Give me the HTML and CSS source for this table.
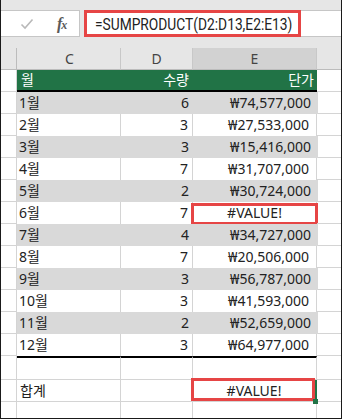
FILE: index.html
```html
<!DOCTYPE html>
<html lang="ko">
<head>
<meta charset="utf-8">
<title>SUMPRODUCT</title>
<link rel="stylesheet" href="styles.css">
</head>
<body>
<div class="app">
  <div class="fbar">
    <div class="fbtns">
      <svg class="check" width="14" height="12" viewBox="0 0 14 12"><path d="M1.5 6.5 L5 10 L12.5 1.5" fill="none" stroke="#b9b9b9" stroke-width="1.6"/></svg>
      <span class="fx">f<span class="x">x</span></span>
    </div>
    <div class="redbox"><span class="formula">=SUMPRODUCT(D2:D13,E2:E13)</span></div>
    <div class="finput"></div>
  </div>
  <div class="sheet">
    <div class="row colhead">
      <div class="rh"></div><div class="c">C</div><div class="d">D</div><div class="e selcol">E</div><div class="rest"></div>
    </div>
    <div class="row thead">
      <div class="rh"></div><div class="c">월</div><div class="d num">수량</div><div class="e num hd">단가</div><div class="rest"></div>
    </div>
    <div class="row data g"><div class="rh"></div><div class="c">1월</div><div class="d num">6</div><div class="e num">₩74,577,000</div><div class="rest"></div></div>
    <div class="row data"><div class="rh"></div><div class="c">2월</div><div class="d num">3</div><div class="e num">₩27,533,000</div><div class="rest"></div></div>
    <div class="row data g"><div class="rh"></div><div class="c">3월</div><div class="d num">3</div><div class="e num">₩15,416,000</div><div class="rest"></div></div>
    <div class="row data"><div class="rh"></div><div class="c">4월</div><div class="d num">7</div><div class="e num">₩31,707,000</div><div class="rest"></div></div>
    <div class="row data g"><div class="rh"></div><div class="c">5월</div><div class="d num">2</div><div class="e num">₩30,724,000</div><div class="rest"></div></div>
    <div class="row data"><div class="rh"></div><div class="c">6월</div><div class="d num">7</div><div class="e err mark">#VALUE!</div><div class="rest"></div></div>
    <div class="row data g"><div class="rh"></div><div class="c">7월</div><div class="d num">4</div><div class="e num">₩34,727,000</div><div class="rest"></div></div>
    <div class="row data"><div class="rh"></div><div class="c">8월</div><div class="d num">7</div><div class="e num">₩20,506,000</div><div class="rest"></div></div>
    <div class="row data g"><div class="rh"></div><div class="c">9월</div><div class="d num">3</div><div class="e num">₩56,787,000</div><div class="rest"></div></div>
    <div class="row data"><div class="rh"></div><div class="c">10월</div><div class="d num">3</div><div class="e num">₩41,593,000</div><div class="rest"></div></div>
    <div class="row data g"><div class="rh"></div><div class="c">11월</div><div class="d num">2</div><div class="e num">₩52,659,000</div><div class="rest"></div></div>
    <div class="row data"><div class="rh"></div><div class="c">12월</div><div class="d num">3</div><div class="e num">₩64,977,000</div><div class="rest"></div></div>
    <div class="row empty"><div class="rh"></div><div class="c"></div><div class="d"></div><div class="e"></div><div class="rest"></div></div>
    <div class="row total"><div class="rh"></div><div class="c">합계</div><div class="d"></div><div class="e err mark sel">#VALUE!<span class="handle"></span></div><div class="rest"></div></div>
    <div class="row last"><div class="rh"></div><div class="c"></div><div class="d"></div><div class="e"></div><div class="rest"></div></div>
  </div>
</div>
</body>
</html>
```

FILE: styles.css
```css
* { box-sizing: border-box; }
html, body { margin: 0; padding: 0; background: #fff; }
body {
  font-family: "Noto Sans", "Noto Sans CJK KR", sans-serif;
  color: #222;
}
.app {
  width: 342px;
  height: 419px;
  background: #e6e6e6;
  border-left: 1px solid #1a1a1a;
  border-right: 1px solid #1a1a1a;
  border-bottom: 1px solid #1a1a1a;
  overflow: hidden;
}
.fbar {
  display: flex;
  height: 37px;
  padding-top: 10px;
  margin-bottom: 11px;
  gap: 4px;
}
.fbtns {
  width: 79px;
  background: #fff;
  border: 1px solid #c6c6c6;
  border-left: none;
  display: flex;
  align-items: center;
  padding-left: 19px;
}
.check { margin-top: 1px; }
.fx {
  margin-left: 23px;
  font-family: "Liberation Serif", serif;
  font-style: italic;
  font-weight: bold;
  font-size: 16px;
  color: #5a5a5a;
  letter-spacing: -1px;
}
.fx .x { font-size: 12px; }
.redbox {
  width: 217px;
  border: 3px solid #e64545;
  background: #fff;
  overflow: hidden;
}
.formula {
  display: inline-block;
  font-family: Roboto, "Noto Sans", sans-serif;
  font-size: 17px;
  line-height: 21px;
  margin-left: 8px;
  color: #222;
  white-space: nowrap;
  transform: scaleX(0.81);
  transform-origin: left center;
}
.finput {
  flex: 1;
  margin-left: -4px;
  background: #fff;
  border-top: 1px solid #c6c6c6;
  border-bottom: 1px solid #c6c6c6;
}
.sheet { background: #fff; }
.row {
  display: flex;
  height: 22px;
  font-size: 14px;
  line-height: 21px;
}
.row > div { flex: none; position: relative; white-space: nowrap; }
.rh { width: 16px; border-right: 1px solid #d4d4d4; border-bottom: 1px solid #d4d4d4; }
.c { width: 104px; padding-left: 2px; }
.d { width: 72px; }
.e { width: 124px; }
.rest { flex: 1 !important; border-bottom: 1px solid #d4d4d4; }
.num { text-align: right; }
.d.num { padding-right: 4px; }
.e.num { padding-right: 7px; }
.e.hd { padding-right: 3px; }

.colhead { background: #e6e6e6; }
.colhead > div {
  background: #e6e6e6;
  border-bottom: 1px solid #bcbcbc;
  border-right: 1px solid #c8c8c8;
  text-align: center;
  color: #444;
  font-size: 14px;
  line-height: 21px;
}
.colhead .rh { border-right-color: #bcbcbc; }
.colhead .rest { border-right: none; }
.colhead .selcol { background: #d2d2d2; }

.thead .c, .thead .d, .thead .e {
  background: #217346;
  color: #fff;
  border-bottom: 2px solid #000;
  line-height: 20px;
}
.thead .c { padding-left: 4px; }

.data .c, .data .d, .data .e { border-right: 1px solid #d4d4d4; }
.data.g .c, .data.g .d, .data.g .e { background: #d9d9d9; border-right: none; }
.data.g .e { width: 125px; }

.err { text-align: center; }
.mark::after {
  content: "";
  position: absolute;
  left: -2px;
  right: -2px;
  top: 1px;
  bottom: -1px;
  border: 3px solid #e64545;
}

.empty .c, .empty .d, .empty .e {
  border-top: 2px solid #000;
  border-right: 1px solid #d4d4d4;
  border-bottom: 1px solid #d4d4d4;
}
.empty { height: 24px; }
.total .c, .total .d, .total .e {
  border-right: 1px solid #d4d4d4;
  border-bottom: 1px solid #d4d4d4;
}
.total .c { padding-left: 3px; }
.total .mark::after { top: -2px; bottom: 0; left: -2px; right: 0; }
.sel { border-right: 2px solid #217346 !important; }
.handle {
  position: absolute;
  right: -3px;
  bottom: -3px;
  width: 5px;
  height: 5px;
  background: #217346;
  z-index: 2;
}
.last { height: 16px; }
.last .c, .last .d, .last .e { border-right: 1px solid #d4d4d4; }
.last .rest, .last .rh { border-bottom: none; }
```
